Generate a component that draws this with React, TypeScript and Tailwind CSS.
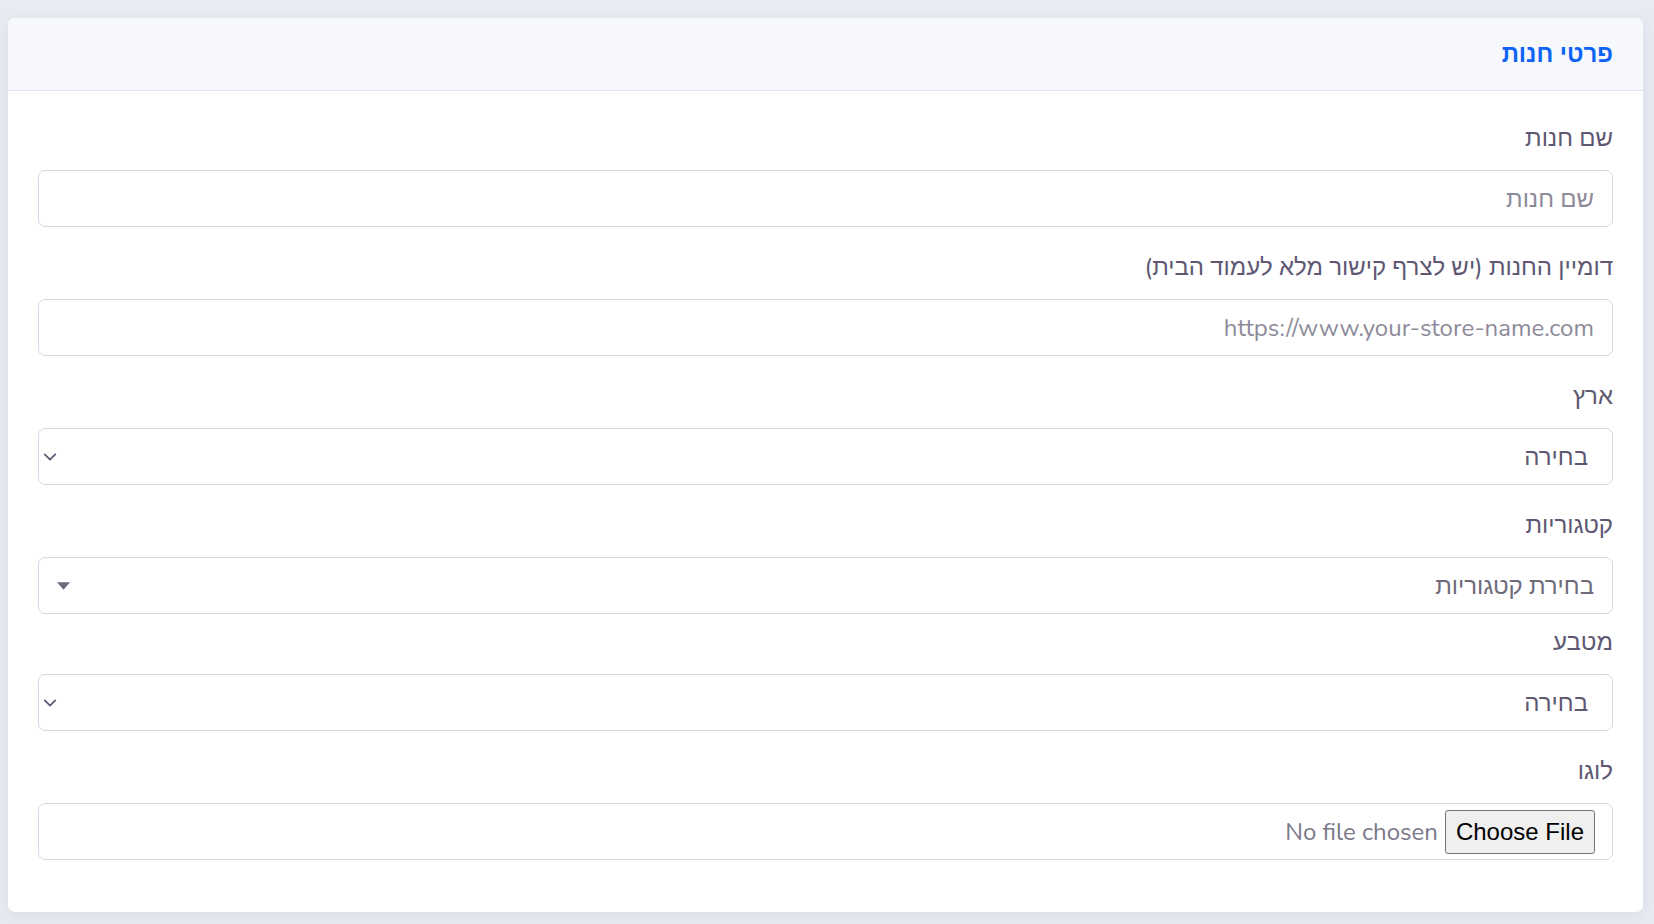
const font = { fontFamily: '"Nunito", "Noto Sans", "Liberation Sans", sans-serif' };

const Chevron = () => (
  <svg width="14" height="14" viewBox="0 0 16 16" fill="none" className="text-[#5e5873]">
    <path d="M2 5l6 6 6-6" stroke="currentColor" strokeWidth="2" strokeLinecap="round" strokeLinejoin="round" />
  </svg>
);

const Caret = () => (
  <svg width="13" height="8" viewBox="0 0 12 7" className="text-[#6e6b7b]">
    <path d="M0 0h12L6 7z" fill="currentColor" />
  </svg>
);

const Field = ({ label, mb = "mb-[25px]", children }: { label: string; mb?: string; children: React.ReactNode }) => (
  <div className={mb}>
    <label className="mb-[17px] block text-[24px] leading-[30px] text-[#5e5873]">{label}</label>
    {children}
  </div>
);

const boxCls =
  "flex h-[57px] w-full items-center rounded-[7px] border border-[#d8d6e6] bg-white text-[24px]";

export default function App() {
  return (
    <div dir="rtl" style={font} className="min-h-screen bg-[#e8ebf3] pb-[12px] pl-[8px] pr-[11px] pt-[18px]">
      <div className="overflow-hidden rounded-[7px] bg-white shadow-[0_4px_18px_rgba(60,60,100,0.08)]">
        <div className="flex h-[73px] items-center border-b border-[#e2e1ee] bg-[#f7f8fc] px-[30px]">
          <h2 className="text-[24px] font-bold text-[#0d63f3]">פרטי חנות</h2>
        </div>

        <div className="px-[30px] pb-[27px] pt-[32px]">
          <Field label="שם חנות">
            <div className={`${boxCls} px-[18px] text-[#8d8a9a]`}>שם חנות</div>
          </Field>

          <Field label="דומיין החנות (יש לצרף קישור מלא לעמוד הבית)">
            <div className={`${boxCls} px-[18px] text-[#8d8a9a]`}>
              <span dir="ltr">https://www.your-store-name.com</span>
            </div>
          </Field>

          <Field label="ארץ">
            <div className={`${boxCls} justify-between pl-[4px] pr-[24px] text-[#5e5873]`}>
              <span>בחירה</span>
              <Chevron />
            </div>
          </Field>

          <Field label="קטגוריות" mb="mb-[13px]">
            <div className={`${boxCls} justify-between pl-[18px] pr-[18px] text-[#6e6b7b]`}>
              <span>בחירת קטגוריות</span>
              <Caret />
            </div>
          </Field>

          <Field label="מטבע">
            <div className={`${boxCls} justify-between pl-[4px] pr-[24px] text-[#5e5873]`}>
              <span>בחירה</span>
              <Chevron />
            </div>
          </Field>

          <Field label="לוגו">
            <div className={`${boxCls} gap-[7px] px-[17px]`}>
              <button
                type="button"
                className="h-[44px] rounded-[3px] border border-[#767676] bg-[#efefef] px-[10px] text-[24px] text-black"
                style={{ fontFamily: '"Liberation Sans", Arial, sans-serif' }}
              >
                Choose File
              </button>
              <span dir="ltr" className="text-[#7a7889]">No file chosen</span>
            </div>
          </Field>
        </div>
      </div>
    </div>
  );
}
